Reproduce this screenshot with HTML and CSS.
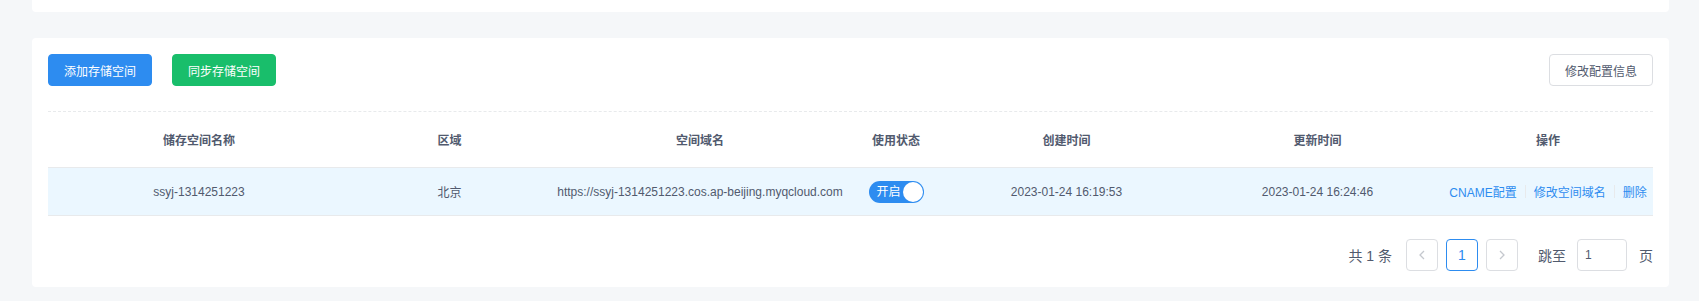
FILE: index.html
```html
<!DOCTYPE html>
<html>
<head>
    <title>存储空间管理</title>
    <link rel="stylesheet" href="styles.css">
</head>
<body>

    <div class="top-card"></div>

    <div class="main-card">
        <div class="toolbar">
            <div class="toolbar-left">
                <button class="btn btn-primary" type="button">添加存储空间</button>
                <button class="btn btn-success" type="button">同步存储空间</button>
            </div>
            <button class="btn btn-default" type="button">修改配置信息</button>
        </div>

        <div class="divider"></div>

        <div class="table">
            <div class="table-row table-head">
                <div class="cell">储存空间名称</div>
                <div class="cell">区域</div>
                <div class="cell">空间域名</div>
                <div class="cell">使用状态</div>
                <div class="cell">创建时间</div>
                <div class="cell">更新时间</div>
                <div class="cell">操作</div>
            </div>
            <div class="table-row table-body highlight">
                <div class="cell">ssyj-1314251223</div>
                <div class="cell">北京</div>
                <div class="cell">https://ssyj-1314251223.cos.ap-beijing.myqcloud.com</div>
                <div class="cell">
                    <span class="switch switch-on">
                        <span class="switch-text">开启</span>
                        <span class="switch-knob"></span>
                    </span>
                </div>
                <div class="cell">2023-01-24 16:19:53</div>
                <div class="cell">2023-01-24 16:24:46</div>
                <div class="cell actions">
                    <a class="link">CNAME配置</a>
                    <span class="v-line"></span>
                    <a class="link">修改空间域名</a>
                    <span class="v-line"></span>
                    <a class="link">删除</a>
                </div>
            </div>
        </div>

        <div class="pager">
            <span class="pager-total">共 1 条</span>
            <span class="page-item disabled">
                <svg width="8" height="10" viewBox="0 0 8 10"><path d="M6 1 L2 5 L6 9" fill="none" stroke="#c5c8ce" stroke-width="1.3"/></svg>
            </span>
            <span class="page-item active">1</span>
            <span class="page-item disabled">
                <svg width="8" height="10" viewBox="0 0 8 10"><path d="M2 1 L6 5 L2 9" fill="none" stroke="#c5c8ce" stroke-width="1.3"/></svg>
            </span>
            <span class="pager-jump">跳至</span>
            <input class="pager-input" type="text" value="1">
            <span class="pager-unit">页</span>
        </div>
    </div>

</body>
</html>
```

FILE: styles.css
```css
body {
    margin: 0;
    padding: 0 30px 0 32px;
    background-color: #f5f7f9;
    font-family: "Liberation Sans", Arial, "Noto Sans CJK SC", sans-serif;
    font-size: 12px;
    color: #515a6e;
}

.top-card {
    height: 12px;
    background: white;
    border-radius: 0 0 4px 4px;
    margin-bottom: 26px;
}

.main-card {
    background: white;
    border-radius: 4px;
    padding: 16px;
}

.toolbar {
    display: flex;
    justify-content: space-between;
    align-items: center;
}

.toolbar-left {
    display: flex;
    gap: 20px;
}

.btn {
    height: 32px;
    padding: 0 15px;
    font-family: inherit;
    font-size: 12px;
    border-radius: 4px;
    border: 1px solid transparent;
    cursor: pointer;
}

.btn-primary {
    background: #2d8cf0;
    border-color: #2d8cf0;
    color: white;
}

.btn-success {
    background: #19be6b;
    border-color: #19be6b;
    color: white;
}

.btn-default {
    background: white;
    border-color: #dcdee2;
    color: #515a6e;
}

.divider {
    margin-top: 25px;
    border-top: 1px dashed #e8eaec;
}

.table-row {
    display: grid;
    grid-template-columns: 302px 199px 302px 90px 251px 251px 210px;
    border-bottom: 1px solid #e8eaec;
}

.table-head {
    height: 55px;
    font-weight: bold;
}

.table-body {
    height: 47px;
}

.highlight {
    background: #ebf7ff;
}

.cell {
    display: flex;
    align-items: center;
    justify-content: center;
    white-space: nowrap;
}

.switch {
    position: relative;
    display: inline-block;
    width: 55px;
    height: 22px;
    border-radius: 11px;
    box-sizing: border-box;
}

.switch-on {
    background: #2d8cf0;
}

.switch-text {
    position: absolute;
    left: 8px;
    top: 4px;
    line-height: 14px;
    color: white;
}

.switch-knob {
    position: absolute;
    right: 1px;
    top: 1px;
    width: 20px;
    height: 20px;
    border-radius: 50%;
    background: white;
}

.actions {
    gap: 8px;
}

.link {
    color: #2d8cf0;
    cursor: pointer;
}

.v-line {
    width: 1px;
    height: 13px;
    background: #e8eaec;
}

.pager {
    display: flex;
    justify-content: flex-end;
    align-items: center;
    margin-top: 23px;
    font-size: 14px;
}

.pager-total {
    margin-right: 14px;
}

.page-item {
    display: flex;
    align-items: center;
    justify-content: center;
    width: 32px;
    height: 32px;
    box-sizing: border-box;
    border: 1px solid #dcdee2;
    border-radius: 4px;
    margin-right: 8px;
    font-size: 14px;
}

.page-item.active {
    border-color: #2d8cf0;
    color: #2d8cf0;
}

.pager-jump {
    margin-left: 12px;
    margin-right: 11px;
}

.pager-input {
    width: 50px;
    height: 32px;
    box-sizing: border-box;
    border: 1px solid #dcdee2;
    border-radius: 4px;
    padding: 0 7px;
    font-family: inherit;
    font-size: 12px;
    color: #515a6e;
    outline: none;
    margin-right: 12px;
}
```
